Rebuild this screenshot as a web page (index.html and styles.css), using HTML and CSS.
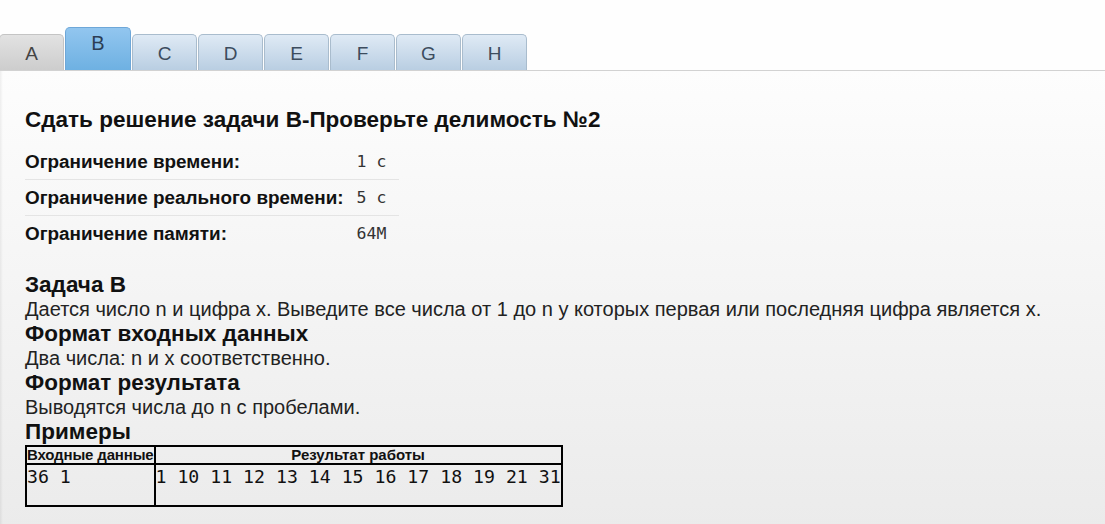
FILE: index.html
```html
<!DOCTYPE html>
<html lang="ru">
<head>
<meta charset="utf-8">
<title>Задача B</title>
<link rel="stylesheet" href="styles.css">
</head>
<body>
<div class="header">
  <nav class="tabs">
    <a class="tab tab-gray">A</a>
    <a class="tab tab-active">B</a>
    <a class="tab">C</a>
    <a class="tab">D</a>
    <a class="tab">E</a>
    <a class="tab">F</a>
    <a class="tab">G</a>
    <a class="tab">H</a>
  </nav>
</div>
<main class="content">
  <h1 class="title">Сдать решение задачи B-Проверьте делимость №2</h1>
  <table class="limits">
    <tr><th>Ограничение времени:</th><td>1 с</td></tr>
    <tr><th>Ограничение реального времени:</th><td>5 с</td></tr>
    <tr><th>Ограничение памяти:</th><td>64M</td></tr>
  </table>
  <section class="statement">
    <h2>Задача B</h2>
    <p>Дается число n и цифра x. Выведите все числа от 1 до n у которых первая или последняя цифра является x.</p>
    <h2>Формат входных данных</h2>
    <p>Два числа: n и x соответственно.</p>
    <h2>Формат результата</h2>
    <p>Выводятся числа до n с пробелами.</p>
    <h2>Примеры</h2>
    <table class="samples">
      <tr><th class="col-in">Входные данные</th><th class="col-out">Результат работы</th></tr>
      <tr><td><pre>36 1</pre></td><td><pre>1 10 11 12 13 14 15 16 17 18 19 21 31</pre></td></tr>
    </table>
  </section>
</main>
</body>
</html>
```
FILE: styles.css
```css
html, body {
  margin: 0;
  padding: 0;
  height: 100%;
}
body {
  font-family: "Liberation Sans", Arial, sans-serif;
  color: #111;
  background: #fdfdfd;
}
.header {
  height: 70px;
  background: #fefefe;
  border-bottom: 1px solid #d2d2d2;
  display: flex;
  align-items: flex-end;
}
.tabs {
  display: flex;
  align-items: flex-end;
  gap: 1px;
  margin-left: -1px;
}
.tab {
  box-sizing: border-box;
  width: 65px;
  height: 36px;
  display: flex;
  align-items: center;
  justify-content: center;
  padding-top: 2px;
  font-size: 19px;
  color: #3c4c5e;
  border: 1px solid #a9bccd;
  border-bottom: none;
  border-radius: 5px 5px 0 0;
  background: linear-gradient(#dfeaf5, #b9cee2);
}
.tab-gray {
  color: #444;
  border-color: #c4c4c4;
  background: linear-gradient(#e2e2e2, #cdcdcd);
}
.tab-active {
  width: 66px;
  height: 43px;
  align-items: flex-start;
  padding-top: 4px;
  color: #2c3e55;
  font-size: 20px;
  border-color: #6ea7d8;
  background: linear-gradient(#92c6ef, #6eb1e2);
}
.content {
  box-sizing: border-box;
  min-height: calc(100% - 71px);
  padding: 36px 25px 20px;
  background: linear-gradient(#fdfdfd, #ebebeb);
  box-shadow: inset 3px 0 3px -2px rgba(0,0,0,0.08);
}
.title {
  margin: 0;
  font-size: 22.5px;
  line-height: 26px;
  font-weight: bold;
  color: #111;
}
.limits {
  margin-top: 11px;
  border-collapse: collapse;
}
.limits th {
  text-align: left;
  font-size: 18.9px;
  font-weight: bold;
  padding: 0 13px 0 0;
  height: 35px;
  color: #111;
}
.limits td {
  font-family: "DejaVu Sans Mono", monospace;
  font-size: 16.5px;
  width: 42px;
  color: #333;
  padding: 0;
}
.limits tr + tr th,
.limits tr + tr td {
  border-top: 1px solid #e4e4e4;
}
.statement {
  margin-top: 21px;
}
.statement h2 {
  margin: 0;
  font-size: 22.5px;
  line-height: 25px;
  font-weight: bold;
  color: #111;
}
.statement p {
  margin: 0;
  font-size: 20px;
  line-height: 24px;
  color: #222;
}
.samples {
  border-collapse: collapse;
  margin-top: 1px;
}
.samples th {
  border: 2px solid #000;
  font-size: 15px;
  line-height: 16px;
  padding: 0 1px;
  font-weight: bold;
  text-align: center;
  white-space: nowrap;
  color: #111;
}
.samples th.col-in {
  text-align: left;
  width: 126px;
  padding: 0;
  letter-spacing: -0.15px;
}
.samples th.col-out {
  width: 402px;
}
.samples td {
  border: 2px solid #000;
  vertical-align: top;
  padding: 0;
  height: 40px;
}
.samples pre {
  margin: 0;
  font-family: "DejaVu Sans Mono", monospace;
  font-size: 18.2px;
  line-height: 24px;
  color: #111;
}
```
